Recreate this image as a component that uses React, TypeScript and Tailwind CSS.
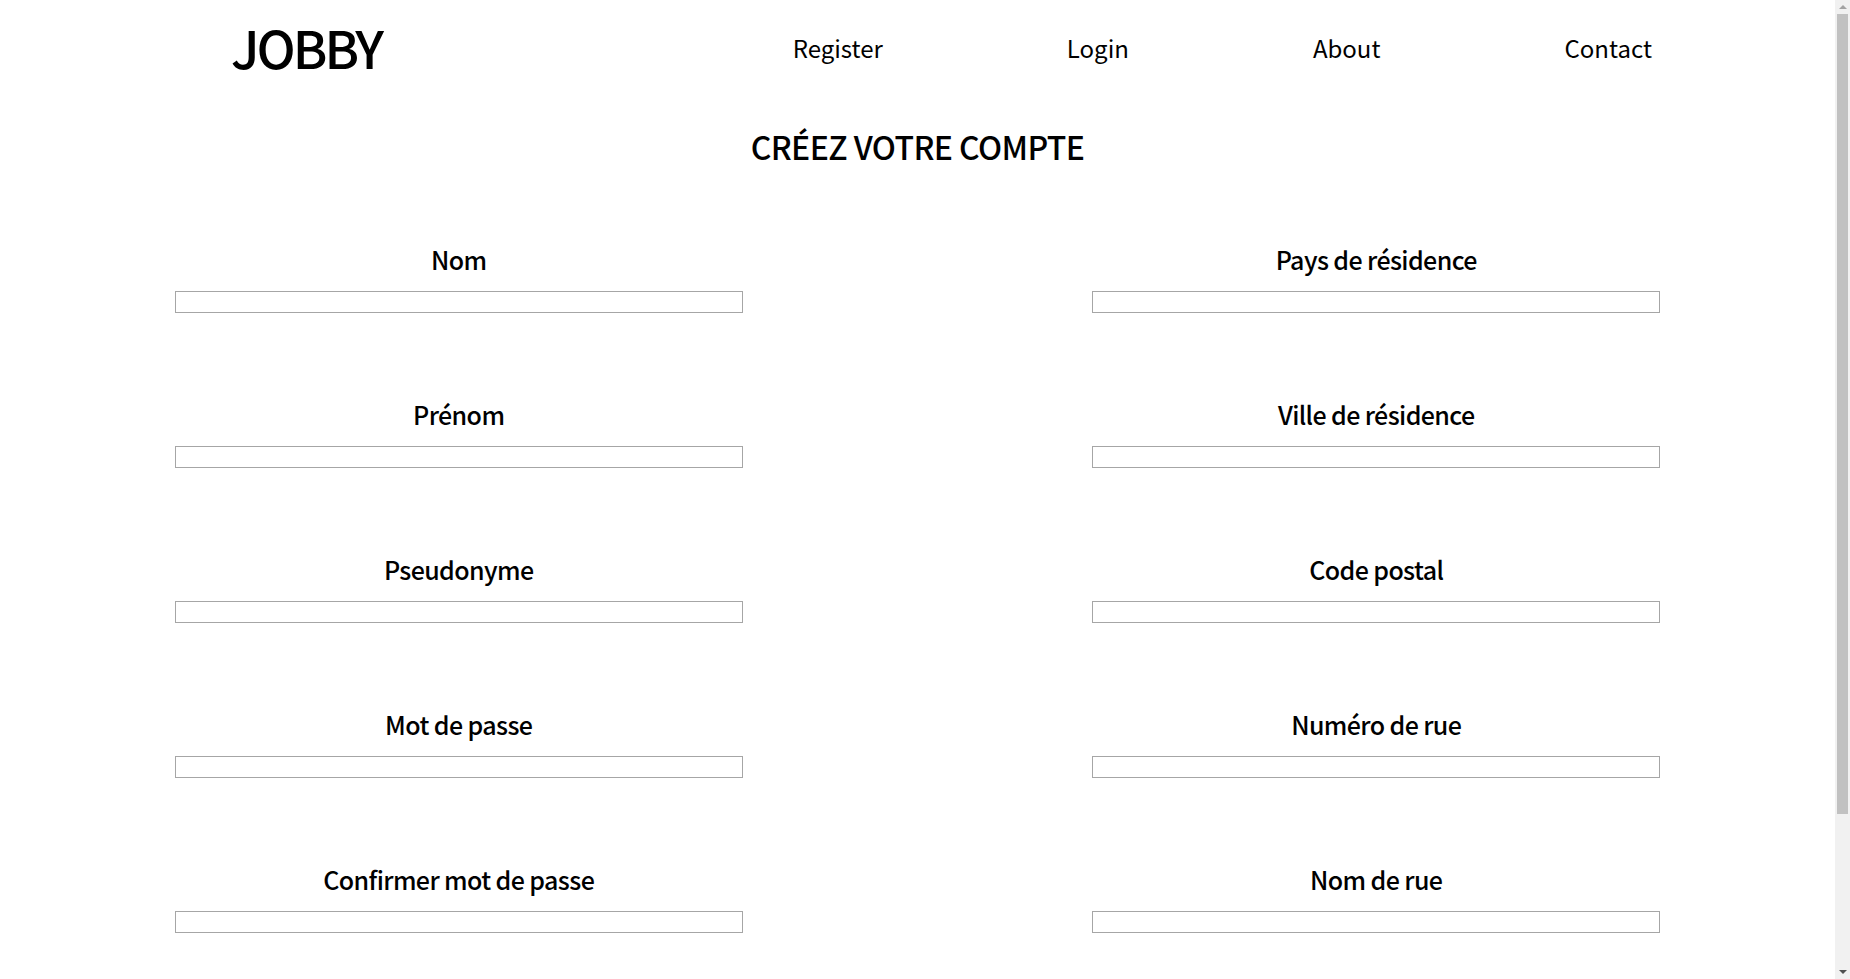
const navLinks = ['Register', 'Login', 'About', 'Contact'];

const leftFields = ['Nom', 'Prénom', 'Pseudonyme', 'Mot de passe', 'Confirmer mot de passe'];
const rightFields = ['Pays de résidence', 'Ville de résidence', 'Code postal', 'Numéro de rue', 'Nom de rue'];

const Field = ({ label }: { label: string }) => (
  <div className="flex flex-col items-center">
    <label className="text-[25px] leading-[36px] font-medium tracking-[-0.6px] text-black">{label}</label>
    <input type="text" className="mt-[14px] w-[568px] h-[22px] border border-[#a6a6a6] bg-white outline-none" />
  </div>
);

// the browser scrollbar seen in the screenshot
const ScrollBar = () => (
  <div className="fixed top-0 right-0 h-screen w-[15px] bg-[#f1f1f1] flex flex-col items-center">
    <div className="mt-[5px] w-0 h-0 border-l-[4px] border-r-[4px] border-b-[4px] border-l-transparent border-r-transparent border-b-[#a3a3a3]" />
    <div className="mt-[5px] w-[11px] h-[800px] bg-[#c1c1c1]" />
    <div className="mt-auto mb-[5px] w-0 h-0 border-l-[4px] border-r-[4px] border-t-[4px] border-l-transparent border-r-transparent border-t-[#505050]" />
  </div>
);

export default function App() {
  const rows = leftFields.map((l, i) => [l, rightFields[i]]);

  return (
    <div
      className="bg-white text-black"
      style={{ fontFamily: '"Noto Sans CJK JP", "Noto Sans", sans-serif' }}
    >
      <div className="w-[1835px] min-h-[1165px]">
        <header className="h-[96px] flex items-start justify-between pl-[231px] pr-[183px]">
          <a href="#" className="mt-[15px] text-[52px] leading-[64px] font-medium tracking-[-3px]">JOBBY</a>
          <nav className="mt-[30px] flex gap-[184px]">
            {navLinks.map((link) => (
              <a key={link} href="#" className="text-[24px] leading-[36px] font-normal">
                {link}
              </a>
            ))}
          </nav>
        </header>

        <h1 className="mt-[30px] text-center text-[32px] leading-[40px] font-medium tracking-[-0.6px]">CRÉEZ VOTRE COMPTE</h1>

        <form className="mt-[75px] grid grid-cols-2 gap-y-[83px] pb-[160px]">
          {rows.map(([left, right]) => (
            <>
              <Field key={left} label={left} />
              <Field key={right} label={right} />
            </>
          ))}
        </form>
      </div>
      <ScrollBar />
    </div>
  );
}
